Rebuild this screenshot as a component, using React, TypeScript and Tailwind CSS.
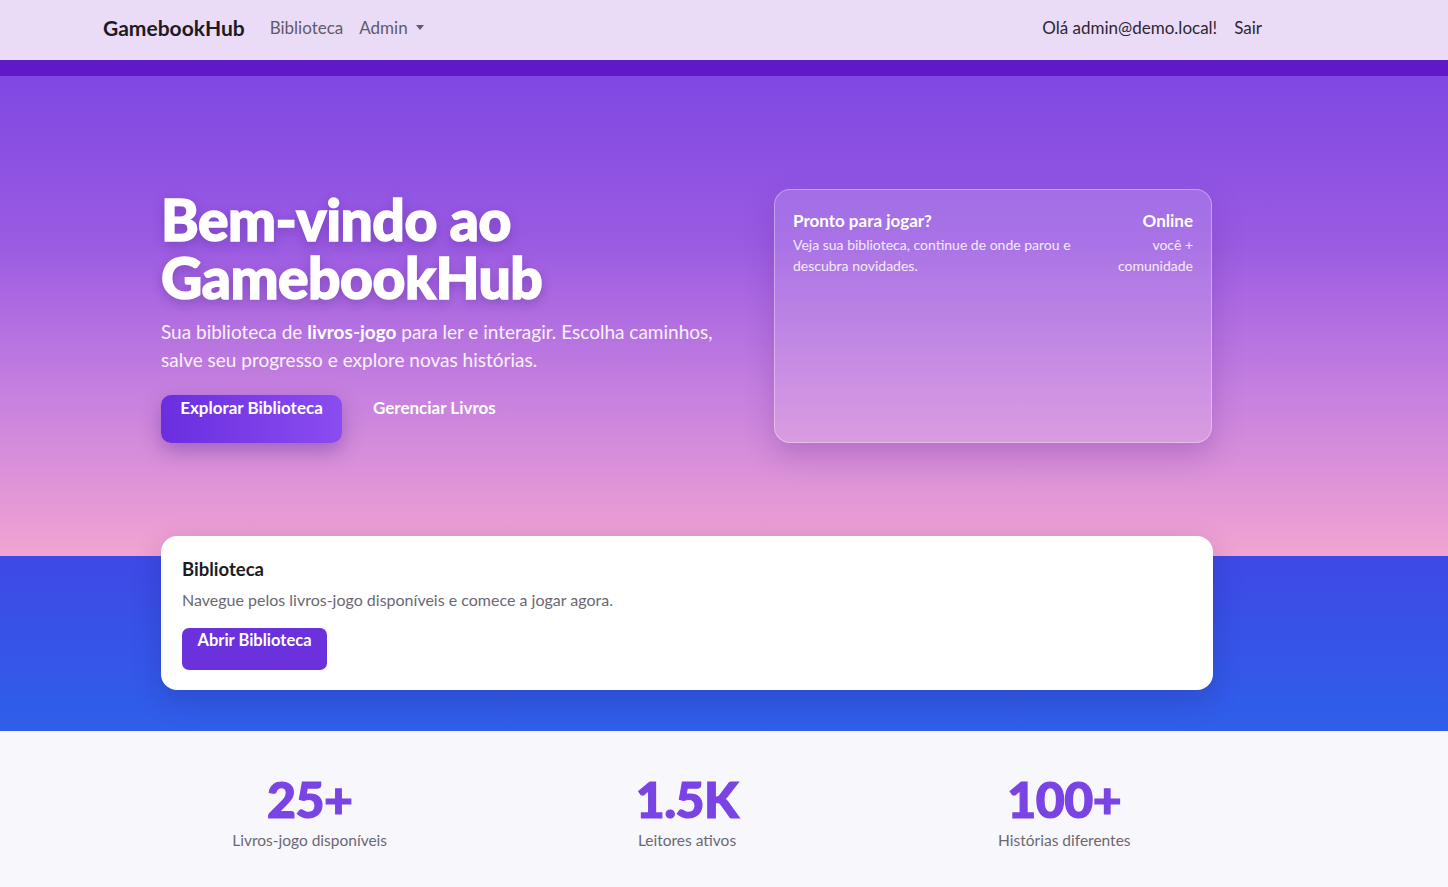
import React from 'react'

const font = { fontFamily: 'Lato, "Noto Sans", sans-serif' }

function NavBar() {
    return (
        <nav className="h-[60px] bg-[#eadcf6] flex items-center pb-[4px] pl-[103px] pr-[186px]">
            <span className="text-[21px] font-bold text-[#1c1a22] mr-[25px]">GamebookHub</span>
            <a className="text-[17px] text-[#605a6c] mr-[16px]">Biblioteca</a>
            <a className="text-[17px] text-[#605a6c] flex items-center gap-[8px]">
                Admin
                <span className="inline-block w-0 h-0 border-l-[4px] border-r-[4px] border-t-[5px] border-l-transparent border-r-transparent border-t-[#605a6c] mt-[-2px]" />
            </a>
            <div className="ml-auto flex items-center gap-[17px] text-[17px] text-[#2a2733]">
                <span>Olá admin@demo.local!</span>
                <a>Sair</a>
            </div>
        </nav>
    )
}

function Hero() {
    return (
        <section className="h-[480px] bg-[linear-gradient(180deg,#7f48e3_0%,#9b5be2_35%,#c57fdf_65%,#f2a4d1_100%)] pt-[113px] pl-[161px] pr-[236px] flex justify-between">
            <div className="w-[580px] pt-[4px]">
                <h1 className="text-[57px] font-black leading-[58px] text-white tracking-[-0.5px] [-webkit-text-stroke:1.5px_#fff] [text-shadow:0_4px_12px_rgba(60,20,120,0.35)] mt-[-3px]">
                    Bem-vindo ao
                    <br />
                    GamebookHub
                </h1>
                <p className="mt-[12px] text-[19px] leading-[28px] text-white/90">
                    Sua biblioteca de <strong className="font-bold text-white">livros-jogo</strong> para ler e interagir.
                    Escolha caminhos, salve seu progresso e explore novas histórias.
                </p>
                <div className="mt-[21px] flex items-start gap-[31px]">
                    <button className="h-[48px] w-[181px] rounded-[10px] bg-[linear-gradient(90deg,#6a2edf,#8b4cf0)] text-white font-bold text-[17px] flex justify-center items-start shadow-[0_8px_20px_rgba(70,30,140,0.35)]">
                        Explorar Biblioteca
                    </button>
                    <a className="text-white font-bold text-[17px]">Gerenciar Livros</a>
                </div>
            </div>
            <div className="w-[438px] h-[254px] rounded-[16px] border border-white/35 bg-white/15 shadow-[0_12px_30px_rgba(80,30,140,0.25)] px-[18px] pt-[18px] flex justify-between">
                <div>
                    <div className="text-[17px] font-bold text-white">Pronto para jogar?</div>
                    <div className="text-[14px] leading-[21px] text-white/85 w-[300px]">
                        Veja sua biblioteca, continue de onde parou e descubra novidades.
                    </div>
                </div>
                <div className="text-right">
                    <div className="text-[17px] font-bold text-white">Online</div>
                    <div className="text-[14px] leading-[21px] text-white/85">
                        você +
                        <br />
                        comunidade
                    </div>
                </div>
            </div>
        </section>
    )
}

function LibraryBand() {
    return (
        <section className="bg-[linear-gradient(180deg,#3e49e5,#2f5fea)] pb-[41px] pl-[161px] pr-[235px]">
            <div className="relative -top-[20px] mb-[-20px] rounded-[16px] bg-white p-[21px] h-[154px] shadow-[0_10px_30px_rgba(20,20,80,0.2)]">
                <h2 className="text-[18.5px] font-bold text-[#1d1b24] leading-[22px] mt-[1px]">Biblioteca</h2>
                <p className="mt-[8px] text-[16px] text-[#6b6774]">
                    Navegue pelos livros-jogo disponíveis e comece a jogar agora.
                </p>
                <button className="mt-[16px] h-[42px] w-[145px] rounded-[7px] bg-[#6a31dd] text-white font-bold text-[16.5px] flex justify-center items-start">
                    Abrir Biblioteca
                </button>
            </div>
        </section>
    )
}

const stats = [
    { value: '25+', label: 'Livros-jogo disponíveis' },
    { value: '1.5K', label: 'Leitores ativos' },
    { value: '100+', label: 'Histórias diferentes' },
]

function Stats() {
    return (
        <section className="h-[156px] bg-[#f8f7fc] pt-[40px]">
            <div className="ml-[121px] w-[1132px] grid grid-cols-3">
                {stats.map((s) => (
                    <div key={s.label} className="text-center">
                        <div className="text-[50px] leading-[56px] font-black text-[#7a44e4] tracking-[-0.5px] [-webkit-text-stroke:1.2px_#7a44e4]">
                            {s.value}
                        </div>
                        <div className="mt-[2px] text-[15.5px] text-[#6b6774]">{s.label}</div>
                    </div>
                ))}
            </div>
        </section>
    )
}

export default function App() {
    return (
        <div style={font} className="w-[1448px] min-h-[887px] bg-[#f8f7fc]">
            <NavBar />
            <div className="h-[16px] bg-[#5f1ac8]" />
            <Hero />
            <LibraryBand />
            <Stats />
        </div>
    )
}
